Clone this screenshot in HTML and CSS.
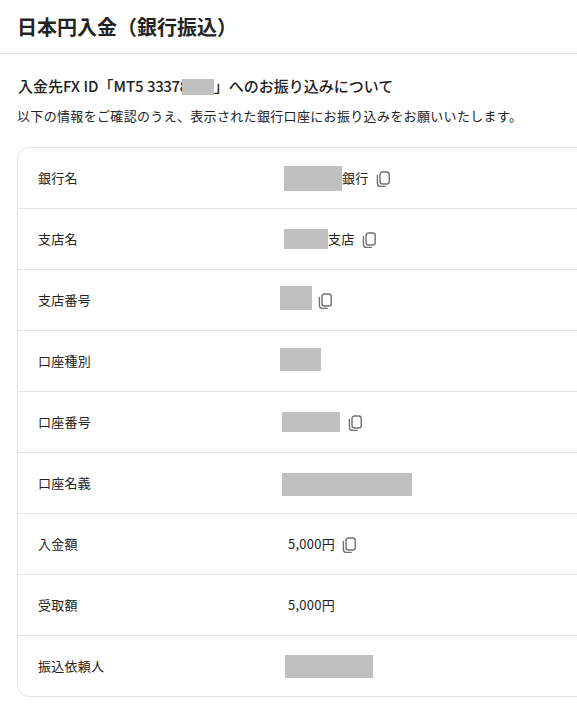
FILE: index.html
```html
<!DOCTYPE html>
<html lang="ja">
  <head>
    <meta charset="UTF-8" />
    <meta name="viewport" content="width=device-width, initial-scale=1.0" />
    <title>日本円入金（銀行振込）</title>
    <link rel="stylesheet" href="styles.css">
  </head>
  <body>
    <svg class="icon-defs" width="0" height="0">
      <symbol id="copy" viewBox="0 0 14 16">
        <rect x="4" y="1" width="9.200" height="12" rx="2.600" fill="none" stroke="#707070" stroke-width="1.400" />
        <path d="M1.400 4.500v7.900c0 1.900 1.200 3.100 3.100 3.100h4.700" fill="none" stroke="#707070" stroke-width="1.400" stroke-linecap="round" />
      </symbol>
    </svg>
    <div class="page">
      <header class="page-header">
        <h1>日本円入金（銀行振込）</h1>
      </header>
      <main class="content">
        <h2>入金先FX ID「MT5 <span class="id-digits">33378</span><span class="mask mask-id"></span>」へのお振り込みについて</h2>
        <p class="lead">以下の情報をご確認のうえ、表示された銀行口座にお振り込みをお願いいたします。</p>
        <dl class="info-card">
          <div class="info-row">
            <dt>銀行名</dt>
            <dd><span class="mask mask-bank"></span><span class="value">銀行</span><svg class="copy"><use href="#copy" /></svg></dd>
          </div>
          <div class="info-row">
            <dt>支店名</dt>
            <dd><span class="mask mask-branch"></span><span class="value">支店</span><svg class="copy"><use href="#copy" /></svg></dd>
          </div>
          <div class="info-row">
            <dt>支店番号</dt>
            <dd><span class="mask mask-branch-no"></span><svg class="copy copy-branch-no"><use href="#copy" /></svg></dd>
          </div>
          <div class="info-row">
            <dt>口座種別</dt>
            <dd><span class="mask mask-type"></span></dd>
          </div>
          <div class="info-row">
            <dt>口座番号</dt>
            <dd><span class="mask mask-account"></span><svg class="copy copy-account"><use href="#copy" /></svg></dd>
          </div>
          <div class="info-row">
            <dt>口座名義</dt>
            <dd><span class="mask mask-holder"></span></dd>
          </div>
          <div class="info-row">
            <dt>入金額</dt>
            <dd><span class="value">5,000円</span><svg class="copy"><use href="#copy" /></svg></dd>
          </div>
          <div class="info-row">
            <dt>受取額</dt>
            <dd><span class="value">5,000円</span></dd>
          </div>
          <div class="info-row">
            <dt>振込依頼人</dt>
            <dd><span class="mask mask-sender"></span></dd>
          </div>
        </dl>
      </main>
    </div>
  </body>
</html>
```

FILE: styles.css
```css
* {
  box-sizing: border-box;
}

body {
  margin: 0;
  background-color: #ffffff;
  color: #222222;
  font-family: "Noto Sans CJK JP", "Noto Sans", sans-serif;
}

.icon-defs {
  display: block;
  height: 0;
}

.page {
  width: 577px;
  height: 707px;
  overflow: hidden;
}

.page-header {
  height: 54px;
  padding: 0 17px;
  display: flex;
  align-items: center;
  border-bottom: 1px solid #e4e4e4;
}

h1 {
  margin: 0;
  font-size: 20px;
  font-weight: 700;
  line-height: 28px;
}

.content {
  padding: 22px 0 0 17px;
}

h2 {
  margin: 0 0 0 1px;
  font-size: 15px;
  font-weight: 500;
  line-height: 20px;
  white-space: nowrap;
}

.id-digits {
  letter-spacing: -0.4px;
}

.lead {
  margin: 10px 0 21px;
  font-size: 13px;
  letter-spacing: 0.33px;
  line-height: 20px;
  white-space: nowrap;
}

.info-card {
  width: 640px;
  margin: 0;
  border: 1px solid #e4e4e4;
  border-radius: 12px;
}

.info-row {
  height: 61px;
  display: flex;
  align-items: center;
  padding-left: 20px;
  border-bottom: 1px solid #e4e4e4;
  font-size: 13px;
  letter-spacing: 0.26px;
}

.info-row:last-child {
  height: 60px;
  border-bottom: none;
}

dt {
  width: 250px;
  margin-bottom: 2px;
}

dd {
  margin: 0;
  display: flex;
  align-items: center;
}

.value {
  margin-bottom: 2px;
}

.mask {
  display: inline-block;
  background-color: #c0c0c0;
}

.mask-id {
  width: 32px;
  height: 16px;
  margin-left: -6px;
  vertical-align: -3px;
}

.mask-bank {
  width: 58px;
  height: 25px;
  margin-left: -4px;
}

.mask-branch {
  width: 44px;
  height: 20px;
  margin-left: -4px;
}

.mask-branch-no {
  width: 32px;
  height: 24px;
  margin: -4px 0 0 -8px;
}

.mask-type {
  width: 41px;
  height: 23px;
  margin: -4px 0 0 -8px;
}

.mask-account {
  width: 58px;
  height: 20px;
  margin-left: -6px;
}

.mask-holder {
  width: 130px;
  height: 23px;
  margin: 2px 0 0 -6px;
}

.mask-sender {
  width: 88px;
  height: 23px;
  margin-left: -3px;
}

.copy {
  width: 14px;
  height: 16px;
  margin-left: 7px;
  margin-top: 1px;
}

.copy-branch-no {
  margin-left: 6px;
}

.copy-account {
  margin-left: 8px;
}
```
